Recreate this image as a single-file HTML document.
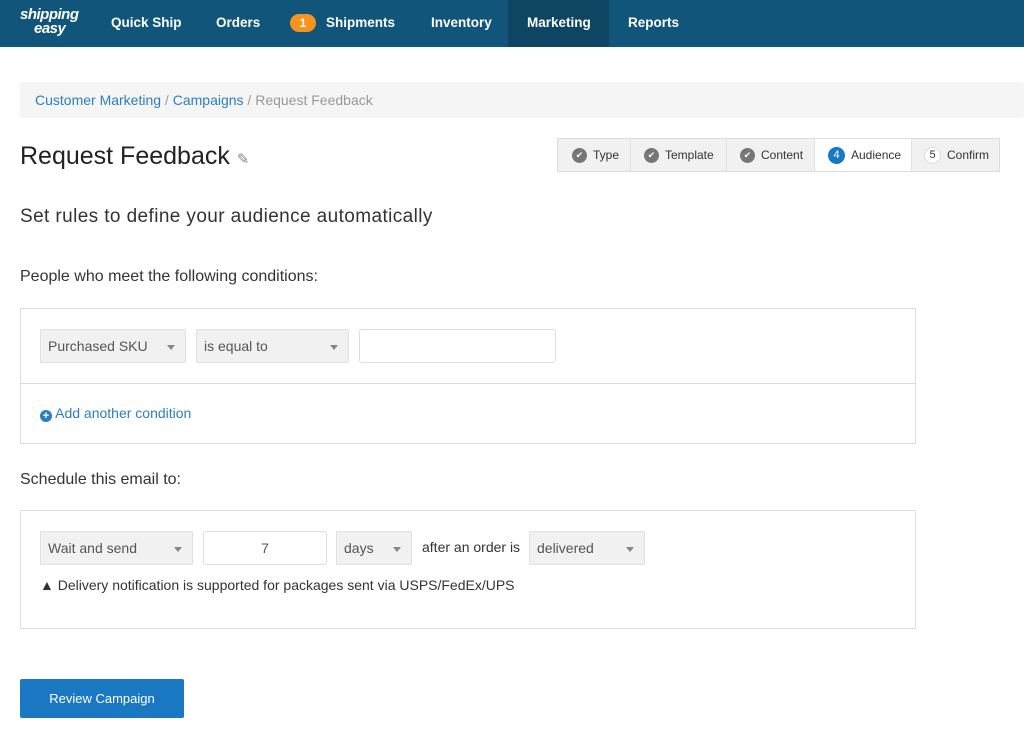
<!DOCTYPE html>
<html><head><style>
*{box-sizing:border-box;margin:0;padding:0}
body{width:1024px;height:752px;background:#fff;font-family:"Liberation Sans",sans-serif;color:#333;position:relative;overflow:hidden}
.a{position:absolute}
.nav{left:0;top:0;width:1024px;height:47px;background:#11567a}
.nl{position:absolute;top:15px;color:#fff;font-weight:bold;font-size:13.5px}
.sel{background:#f1f1f1;border:1px solid #e0e0e0;border-radius:2px;font-size:14px;color:#555;padding-left:7px;line-height:32px;height:34px}
.sel:after{content:"";position:absolute;right:10px;top:15px;border-left:4px solid transparent;border-right:4px solid transparent;border-top:5px solid #888}
.inp{background:#fff;border:1px solid #ddd;border-radius:3px;height:34px}
.step{position:absolute;top:0;height:32px;font-size:12px;color:#333;display:flex;align-items:center;border-right:1px solid #e0e0e0}
.ck{display:inline-block;width:15px;height:15px;border-radius:50%;background:#777;color:#fff;font-size:9px;line-height:15px;text-align:center;margin-right:6px}
</style></head><body>
<div class="a nav">
<div class="a" style="left:20px;top:8px;color:#fff;font-weight:bold;font-style:italic;font-size:15px;line-height:14px;letter-spacing:-0.5px">shipping<br><span style="margin-left:14px">easy</span></div>
<div class="nl" style="left:111px">Quick Ship</div>
<div class="nl" style="left:216px">Orders</div>
<div class="a" style="left:290px;top:14px;width:26px;height:18px;border-radius:9px;background:#f7941d;color:#fff;font-size:12px;font-weight:bold;text-align:center;line-height:18px">1</div>
<div class="nl" style="left:326px">Shipments</div>
<div class="nl" style="left:431px">Inventory</div>
<div class="a" style="left:508px;top:0;width:101px;height:47px;background:#0d4562"></div>
<div class="nl" style="left:527px">Marketing</div>
<div class="nl" style="left:628px">Reports</div>
</div>
<div class="a" style="left:20px;top:82px;width:1004px;height:36px;background:#f5f5f5;border-radius:3px;font-size:14px;line-height:36px;padding-left:15px;color:#999"><span style="color:#2a7fc1">Customer Marketing</span> / <span style="color:#2a7fc1">Campaigns</span> / Request Feedback</div>
<div class="a" style="left:20px;top:142px;font-size:25px;color:#222">Request Feedback <span style="font-size:15px;color:#888">✎</span></div>
<div class="a" style="left:557px;top:138px;width:443px;height:34px;background:#f1f1f1;border:1px solid #ddd">
<div class="step" style="left:0;width:73px;padding-left:14px"><span class="ck">✔</span>Type</div>
<div class="step" style="left:73px;width:96px;padding-left:13px"><span class="ck">✔</span>Template</div>
<div class="step" style="left:169px;width:88px;padding-left:13px"><span class="ck">✔</span>Content</div>
<div class="step" style="left:257px;width:97px;padding-left:13px;background:#fff"><span class="ck" style="background:#1a78c2;width:17px;height:17px;line-height:17px;font-size:11px">4</span>Audience</div>
<div class="step" style="left:354px;width:87px;padding-left:12px;border:none"><span class="ck" style="background:#fff;color:#333;border:1px solid #ddd;width:17px;height:17px;line-height:15px;font-size:11px">5</span>Confirm</div>
</div>
<div class="a" style="left:20px;top:206px;font-size:19px;letter-spacing:0.4px;color:#333">Set rules to define your audience automatically</div>
<div class="a" style="left:20px;top:268px;font-size:16px;color:#333">People who meet the following conditions:</div>
<div class="a" style="left:20px;top:308px;width:896px;height:136px;border:1px solid #ddd">
<div class="a" style="left:0;top:74px;width:894px;border-top:1px solid #ddd"></div>
</div>
<div class="a sel" style="left:40px;top:329px;width:146px">Purchased SKU</div>
<div class="a sel" style="left:196px;top:329px;width:153px">is equal to</div>
<div class="a inp" style="left:359px;top:329px;width:197px"></div>
<div class="a" style="left:40px;top:405px;font-size:14px;color:#2a7fc1"><span style="display:inline-block;width:12px;height:12px;border-radius:50%;background:#2a7fc1;color:#fff;font-size:11px;line-height:12px;text-align:center;font-weight:bold;vertical-align:-1px">+</span> Add another condition</div>
<div class="a" style="left:20px;top:471px;font-size:16px;color:#333">Schedule this email to:</div>
<div class="a" style="left:20px;top:510px;width:896px;height:119px;border:1px solid #ddd"></div>
<div class="a sel" style="left:40px;top:531px;width:153px">Wait and send</div>
<div class="a inp" style="left:203px;top:531px;width:124px;text-align:center;font-size:14px;line-height:32px;color:#555">7</div>
<div class="a sel" style="left:336px;top:531px;width:76px">days</div>
<div class="a" style="left:422px;top:539px;font-size:14px;color:#333">after an order is</div>
<div class="a sel" style="left:529px;top:531px;width:116px">delivered</div>
<div class="a" style="left:40px;top:577px;font-size:14px;color:#333">▲ Delivery notification is supported for packages sent via USPS/FedEx/UPS</div>
<div class="a" style="left:20px;top:679px;width:164px;height:39px;background:#1a78c2;border-radius:2px;color:#fff;font-size:13px;text-align:center;line-height:39px">Review Campaign</div>
</body></html>
